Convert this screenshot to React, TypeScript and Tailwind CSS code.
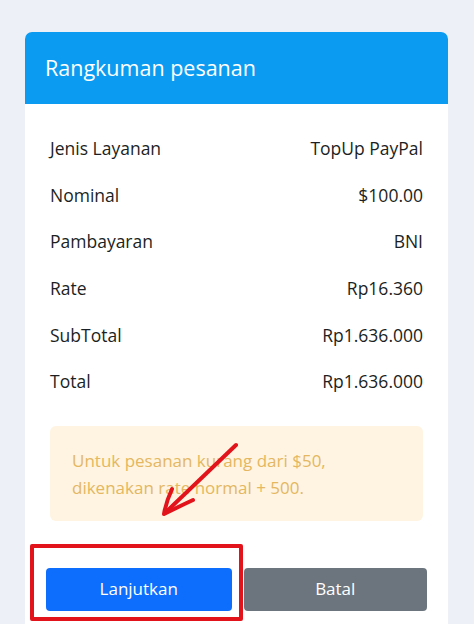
import React from "react";

const rows: [string, string][] = [
  ["Jenis Layanan", "TopUp PayPal"],
  ["Nominal", "$100.00"],
  ["Pambayaran", "BNI"],
  ["Rate", "Rp16.360"],
  ["SubTotal", "Rp1.636.000"],
  ["Total", "Rp1.636.000"],
];

export default function App() {
  return (
    <div
      className="relative w-[474px] h-[624px] overflow-hidden bg-[#eef0f7] pl-[25px] pt-[32px]"
      style={{ fontFamily: "'Open Sans', Lato, sans-serif" }}
    >
      <div className="w-[423px] bg-white rounded-t-[7px] h-[640px]">
        <div className="h-[72px] bg-[#0b9cf1] rounded-t-[7px] flex items-center px-[20px]">
          <span className="text-white text-[21.5px] leading-none">Rangkuman pesanan</span>
        </div>
        <div className="px-[25px] pt-[21px]">
          {rows.map(([k, v]) => (
            <div key={k} className="h-[46.6px] flex items-center justify-between text-[17.5px] text-[#1c1f23]">
              <span>{k}</span>
              <span>{v}</span>
            </div>
          ))}
          <div className="mt-[21px] h-[95px] rounded-[6px] bg-[#fff4e1] px-[22px] pt-[21px] text-[17px] leading-[27px] text-[#e4b760]">
            <div>Untuk pesanan kurang dari $50,</div>
            <div>dikenakan rate normal + 500.</div>
          </div>
        </div>
        <div className="mt-[47px] px-[21px] flex gap-[12px]">
          <button className="w-[186px] h-[43px] rounded-[4px] bg-[#0d6efd] text-white text-[17px]">Lanjutkan</button>
          <button className="w-[184px] h-[43px] rounded-[4px] bg-[#6c757d] text-white text-[17px]">Batal</button>
        </div>
      </div>
      <div className="absolute left-[30px] top-[544px] w-[213px] h-[77px] border-[4px] border-[#e3131b] rounded-[2px]" />
      <svg className="absolute left-0 top-0" width="474" height="624" viewBox="0 0 474 624">
        <path d="M236 445 L166 512" stroke="#e3131b" strokeWidth="4" strokeLinecap="round" fill="none" />
        <path d="M172 489 Q166 502 164 514 Q178 507 193 500" stroke="#e3131b" strokeWidth="4" strokeLinecap="round" strokeLinejoin="round" fill="none" />
      </svg>
    </div>
  );
}
